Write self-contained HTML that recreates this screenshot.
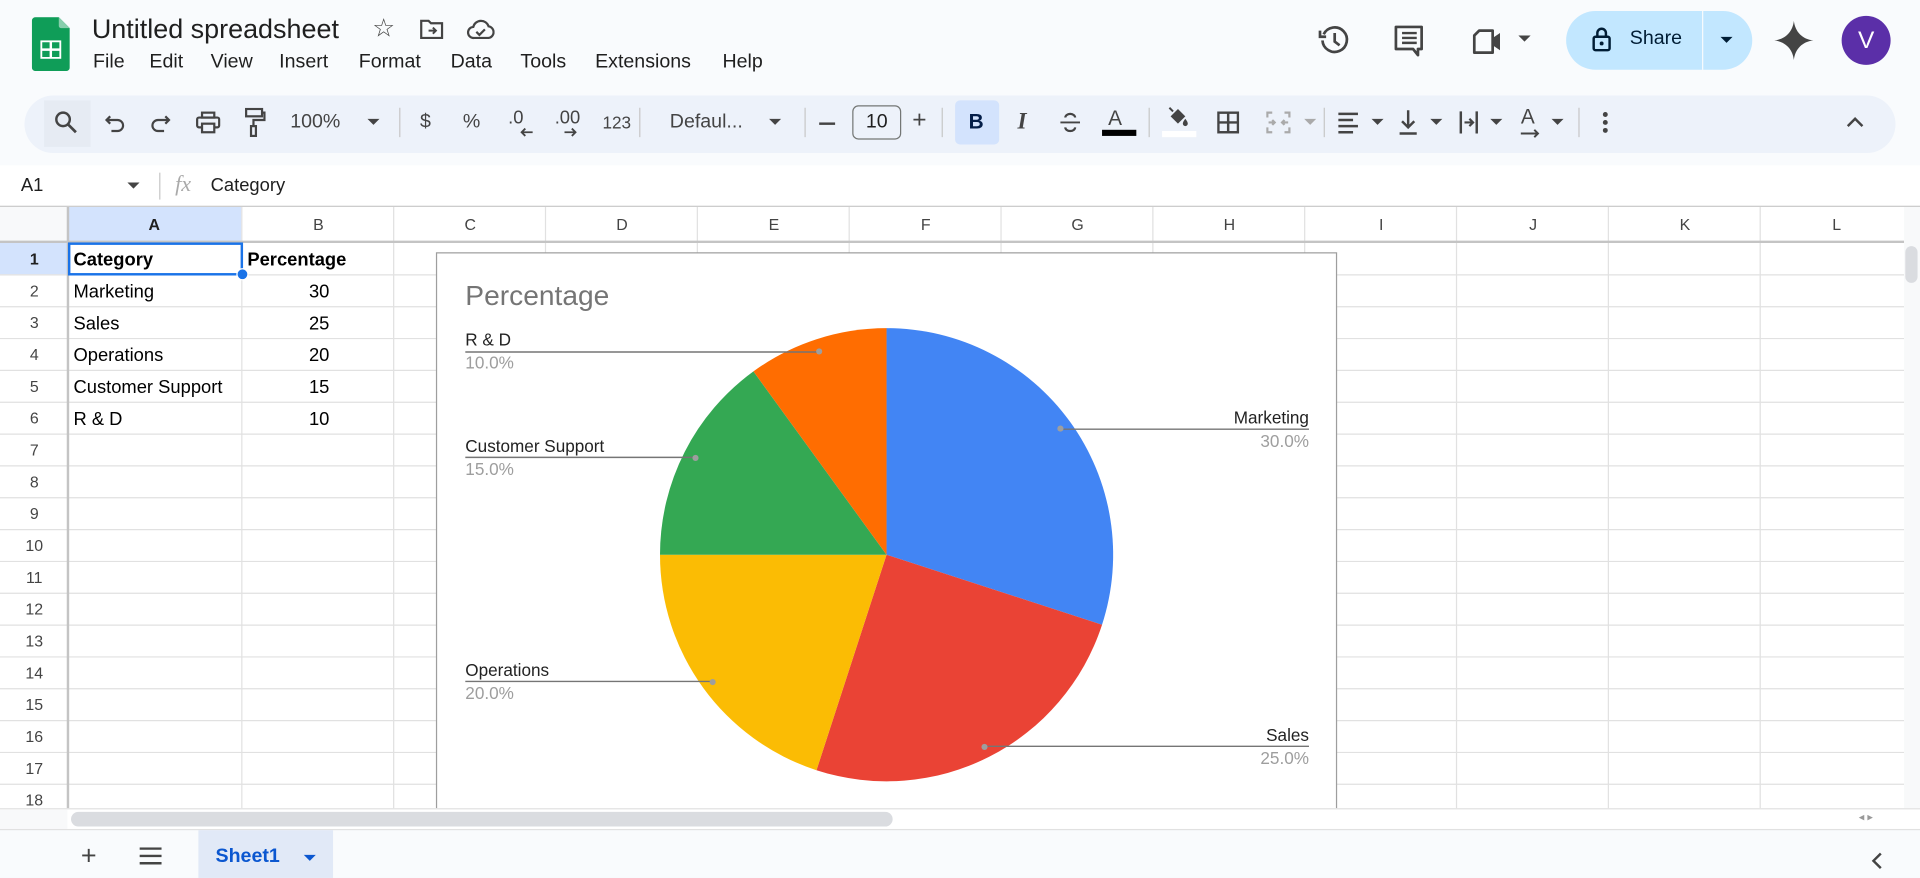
<!DOCTYPE html>
<html><head><meta charset="utf-8">
<style>
html,body{margin:0;padding:0;width:1920px;height:878px;overflow:hidden;background:#fff;font-family:"Liberation Sans",Arial,sans-serif;}
#w{position:absolute;left:0;top:0;width:1568px;height:717px;transform:scale(1.22449);transform-origin:0 0;background:#f9fbfd;}
.a{position:absolute;}
.t{position:absolute;white-space:nowrap;color:#1f1f1f;}
.ic{position:absolute;}
.sep{position:absolute;top:88px;width:1px;height:24px;background:#c7c7c7;}
</style></head><body><div id="w">
<svg class="ic" style="left:26px;top:14px" width="31" height="44" viewBox="0 0 31 44"><path d="M3 0h19l9 9v32a3 3 0 0 1-3 3H3a3 3 0 0 1-3-3V3a3 3 0 0 1 3-3z" fill="#0f9d58"/><path d="M22 0l9 9h-7a2 2 0 0 1-2-2z" fill="#87ceac"/><rect x="7" y="19" width="17" height="15" fill="#fff"/><path d="M8.5 20.5h6v5h-6zM16.5 20.5h6v5h-6zM8.5 27.5h6v5h-6zM16.5 27.5h6v5h-6z" fill="#0f9d58"/></svg>
<div class="t" style="left:75px;top:11px;font-size:22px;color:#1f1f1f">Untitled spreadsheet</div>
<div class="t" style="left:304px;top:11px;font-size:21px;color:#444">☆</div>
<svg class="ic" style="left:343px;top:15px" width="20" height="18" viewBox="0 0 20 18"><path d="M1 2h6l2 2h9v12H1z" fill="none" stroke="#444" stroke-width="1.8"/><path d="M7 10h6M10.5 7.5L13 10l-2.5 2.5" fill="none" stroke="#444" stroke-width="1.6"/></svg>
<svg class="ic" style="left:381px;top:15px" width="23" height="18" viewBox="0 0 23 18"><path d="M6 16a4.5 4.5 0 0 1-.5-9A6.5 6.5 0 0 1 18 6.5 4.8 4.8 0 0 1 18 16z" fill="none" stroke="#444" stroke-width="1.8"/><path d="M8 11l2.5 2.5L15 9" fill="none" stroke="#444" stroke-width="1.8"/></svg>
<div class="t" style="left:76px;top:42px;font-size:16px">File</div>
<div class="t" style="left:122px;top:42px;font-size:16px">Edit</div>
<div class="t" style="left:172px;top:42px;font-size:16px">View</div>
<div class="t" style="left:228px;top:42px;font-size:16px">Insert</div>
<div class="t" style="left:293px;top:42px;font-size:16px">Format</div>
<div class="t" style="left:368px;top:42px;font-size:16px">Data</div>
<div class="t" style="left:425px;top:42px;font-size:16px">Tools</div>
<div class="t" style="left:486px;top:42px;font-size:16px">Extensions</div>
<div class="t" style="left:590px;top:42px;font-size:16px">Help</div>
<svg class="ic" style="left:1076px;top:19px" width="28" height="28" viewBox="0 0 28 28"><path d="M5 9A10 10 0 1 1 4 14" fill="none" stroke="#444" stroke-width="2.2"/><path d="M2 6v5h5" fill="none" stroke="#444" stroke-width="2.2"/><path d="M14 8v7l4 3" fill="none" stroke="#444" stroke-width="2.2"/></svg>
<svg class="ic" style="left:1138px;top:20px" width="26" height="28" viewBox="0 0 26 28"><path d="M2 2h21v18h-3v5l-4-5H2z" fill="none" stroke="#444" stroke-width="2.2" stroke-linejoin="round"/><path d="M7 7h12M7 11h12M7 15h12" stroke="#444" stroke-width="2"/></svg>
<svg class="ic" style="left:1202px;top:22px" width="28" height="24" viewBox="0 0 28 24"><path d="M6 3h11v18H2V7z" fill="none" stroke="#444" stroke-width="2.2" stroke-linejoin="round"/><path d="M17 9l6-4v14l-6-4" fill="#444"/></svg>
<svg class="ic" style="left:1240px;top:29px" width="10" height="6"><path d="M0 0h10L5 5z" fill="#444"/></svg>
<div class="a" style="left:1279px;top:9px;width:152px;height:48px;border-radius:24px;background:#c2e7ff"></div>
<div class="a" style="left:1390px;top:9px;width:1px;height:48px;background:#f9fbfd"></div>
<svg class="ic" style="left:1300px;top:21px" width="16" height="22" viewBox="0 0 16 22"><rect x="1.5" y="9" width="13" height="11" rx="1.5" fill="none" stroke="#001d35" stroke-width="2"/><path d="M4.5 9V6a3.5 3.5 0 0 1 7 0v3" fill="none" stroke="#001d35" stroke-width="2"/><circle cx="8" cy="14.5" r="1.6" fill="#001d35"/></svg>
<div class="t" style="left:1331px;top:23px;font-size:16px;color:#001d35">Share</div>
<svg class="ic" style="left:1405px;top:30px" width="10" height="6"><path d="M0 0h10L5 5z" fill="#001d35"/></svg>
<svg class="ic" style="left:1449px;top:17px" width="32" height="32" viewBox="0 0 32 32"><path d="M16 0C17 9 23 15 32 16 23 17 17 23 16 32 15 23 9 17 0 16 9 15 15 9 16 0z" fill="#444"/></svg>
<div class="a" style="left:1504px;top:13px;width:40px;height:40px;border-radius:50%;background:#5b2fa8;color:#fff;font-size:20px;text-align:center;line-height:40px">V</div>
<div class="a" style="left:20px;top:78px;width:1528px;height:47px;border-radius:24px;background:#edf2fa"></div>
<div class="a" style="left:36px;top:82px;width:38px;height:38px;background:#e6ebf3"></div>
<svg class="ic" style="left:44px;top:90px" width="20" height="20" viewBox="0 0 20 20"><circle cx="7.5" cy="7.5" r="5.5" fill="none" stroke="#444" stroke-width="2"/><path d="M11.5 11.5L18 18" stroke="#444" stroke-width="2.2"/></svg>
<svg class="ic" style="left:85px;top:91px" width="18" height="18" viewBox="0 0 18 18"><path d="M5 4L2 7l3 3" fill="none" stroke="#444" stroke-width="1.8"/><path d="M2 7h9a4.5 4.5 0 0 1 0 9H6" fill="none" stroke="#444" stroke-width="1.8"/></svg>
<svg class="ic" style="left:122px;top:91px" width="18" height="18" viewBox="0 0 18 18"><path d="M13 4l3 3-3 3" fill="none" stroke="#444" stroke-width="1.8"/><path d="M16 7H7a4.5 4.5 0 0 0 0 9h5" fill="none" stroke="#444" stroke-width="1.8"/></svg>
<svg class="ic" style="left:160px;top:90px" width="20" height="20" viewBox="0 0 20 20"><rect x="5" y="2" width="10" height="4" fill="none" stroke="#444" stroke-width="1.8"/><rect x="1" y="6" width="18" height="8" rx="1.5" fill="none" stroke="#444" stroke-width="1.8"/><rect x="5" y="11" width="10" height="7" fill="#edf2fa" stroke="#444" stroke-width="1.8"/></svg>
<svg class="ic" style="left:199px;top:88px" width="18" height="24" viewBox="0 0 18 24"><rect x="2" y="1" width="13" height="6" fill="none" stroke="#444" stroke-width="1.8"/><path d="M15 4h2v6H8v5" fill="none" stroke="#444" stroke-width="1.8"/><rect x="6" y="15" width="4" height="8" fill="none" stroke="#444" stroke-width="1.8"/></svg>
<div class="t" style="left:237px;top:91px;font-size:16px;color:#444">100%</div>
<svg class="ic" style="left:300px;top:97px" width="10" height="6"><path d="M0 0h10L5 5z" fill="#444"/></svg>
<div class="sep" style="left:326px"></div>
<div class="t" style="left:343px;top:91px;font-size:16px;color:#444">$</div>
<div class="t" style="left:378px;top:91px;font-size:16px;color:#444">%</div>
<div class="t" style="left:415px;top:88px;font-size:15px;color:#444">.0</div>
<svg class="ic" style="left:424px;top:104px" width="12" height="8"><path d="M11 4H2M5 1L2 4l3 3" fill="none" stroke="#444" stroke-width="1.5"/></svg>
<div class="t" style="left:453px;top:88px;font-size:15px;color:#444">.00</div>
<svg class="ic" style="left:460px;top:104px" width="12" height="8"><path d="M1 4h9M7 1l3 3-3 3" fill="none" stroke="#444" stroke-width="1.5"/></svg>
<div class="t" style="left:492px;top:92px;font-size:14px;color:#444">123</div>
<div class="sep" style="left:522px"></div>
<div class="t" style="left:547px;top:91px;font-size:16px;color:#444">Defaul...</div>
<svg class="ic" style="left:628px;top:97px" width="10" height="6"><path d="M0 0h10L5 5z" fill="#444"/></svg>
<div class="sep" style="left:657px"></div>
<div class="a" style="left:669px;top:100px;width:13px;height:2px;background:#444"></div>
<div class="a" style="left:696px;top:86px;width:40px;height:28px;border:1px solid #747775;border-radius:5px;box-sizing:border-box;font-size:16px;color:#1f1f1f;text-align:center;line-height:26px">10</div>
<div class="t" style="left:745px;top:87px;font-size:20px;color:#444">+</div>
<div class="sep" style="left:769px"></div>
<div class="a" style="left:780px;top:82px;width:36px;height:36px;border-radius:4px;background:#d3e3fd"></div>
<div class="t" style="left:791px;top:90px;font-size:17px;font-weight:bold;color:#041e49">B</div>
<div class="t" style="left:831px;top:89px;font-size:19px;font-style:italic;font-family:'Liberation Serif',serif;font-weight:bold;color:#444">I</div>
<svg class="ic" style="left:865px;top:90px" width="18" height="20" viewBox="0 0 18 20"><path d="M1 10h16" stroke="#444" stroke-width="1.6"/><path d="M5 6a4 3 0 0 1 8 0M5 14a4 3 0 0 0 8 0" fill="none" stroke="#444" stroke-width="1.8"/></svg>
<div class="t" style="left:905px;top:87px;font-size:17px;color:#444">A</div>
<div class="a" style="left:900px;top:106px;width:28px;height:5px;background:#000"></div>
<div class="sep" style="left:938px"></div>
<svg class="ic" style="left:952px;top:86px" width="20" height="20" viewBox="0 0 20 20"><path d="M4 9l6-6 6 6-6 6z" fill="#444"/><path d="M3 2l3 3" stroke="#444" stroke-width="1.6"/><path d="M16 11c1.5 2 2 3 2 4a2 2 0 0 1-4 0c0-1 .5-2 2-4z" fill="#444"/></svg>
<div class="a" style="left:949px;top:107px;width:28px;height:5px;background:#fff"></div>
<svg class="ic" style="left:994px;top:91px" width="18" height="18" viewBox="0 0 18 18"><rect x="1" y="1" width="16" height="16" fill="none" stroke="#444" stroke-width="2"/><path d="M9 1v16M1 9h16" stroke="#444" stroke-width="2"/></svg>
<svg class="ic" style="left:1034px;top:91px" width="20" height="18" viewBox="0 0 20 18"><path d="M1 5V1h4M1 13v4h4M19 5V1h-4M19 13v4h-4M2 9h5M18 9h-5M5 7l2 2-2 2M15 7l-2 2 2 2" fill="none" stroke="#aaa" stroke-width="1.8"/></svg>
<svg class="ic" style="left:1065px;top:97px" width="10" height="6"><path d="M0 0h10L5 5z" fill="#aaa"/></svg>
<div class="sep" style="left:1081px"></div>
<svg class="ic" style="left:1092px;top:91px" width="18" height="18" viewBox="0 0 18 18"><path d="M1 2h16M1 7h12M1 12h16M1 17h12" stroke="#444" stroke-width="2"/></svg>
<svg class="ic" style="left:1120px;top:97px" width="10" height="6"><path d="M0 0h10L5 5z" fill="#444"/></svg>
<svg class="ic" style="left:1142px;top:89px" width="16" height="22" viewBox="0 0 16 22"><path d="M8 1v14M3 10l5 5 5-5" fill="none" stroke="#444" stroke-width="2"/><path d="M1 20h14" stroke="#444" stroke-width="2"/></svg>
<svg class="ic" style="left:1168px;top:97px" width="10" height="6"><path d="M0 0h10L5 5z" fill="#444"/></svg>
<svg class="ic" style="left:1191px;top:90px" width="18" height="20" viewBox="0 0 18 20"><path d="M2 1v18M15 1v18" stroke="#444" stroke-width="2"/><path d="M5 10h7M9 7l3 3-3 3" fill="none" stroke="#444" stroke-width="1.8"/></svg>
<svg class="ic" style="left:1217px;top:97px" width="10" height="6"><path d="M0 0h10L5 5z" fill="#444"/></svg>
<div class="t" style="left:1242px;top:86px;font-size:17px;color:#444">A</div>
<svg class="ic" style="left:1241px;top:104px" width="18" height="10"><path d="M1 5h14M12 2l3 3-3 3" fill="none" stroke="#444" stroke-width="1.6"/></svg>
<svg class="ic" style="left:1267px;top:97px" width="10" height="6"><path d="M0 0h10L5 5z" fill="#444"/></svg>
<div class="sep" style="left:1289px"></div>
<svg class="ic" style="left:1307px;top:91px" width="8" height="18"><circle cx="4" cy="2.5" r="2" fill="#444"/><circle cx="4" cy="9" r="2" fill="#444"/><circle cx="4" cy="15.5" r="2" fill="#444"/></svg>
<svg class="ic" style="left:1508px;top:95px" width="14" height="10"><path d="M1 8l6-6 6 6" fill="none" stroke="#444" stroke-width="2"/></svg>
<div class="a" style="left:0;top:135px;width:1568px;height:34px;background:#fff;border-bottom:1px solid #c7c7c7;box-sizing:border-box"></div>
<div class="t" style="left:17px;top:143px;font-size:15px">A1</div>
<svg class="ic" style="left:104px;top:149px" width="10" height="6"><path d="M0 0h10L5 5z" fill="#444"/></svg>
<div class="a" style="left:130px;top:141px;width:1px;height:22px;background:#c7c7c7"></div>
<div class="t" style="left:143px;top:140px;font-size:18px;font-style:italic;font-family:'Liberation Serif',serif;color:#aaa">fx</div>
<div class="t" style="left:172px;top:143px;font-size:15px">Category</div>
<div class="a" style="left:0;top:169px;width:1568px;height:492px;background:#fff;overflow:hidden">
<svg width="1568" height="492" style="position:absolute;left:0;top:0">
<rect x="0" y="0" width="1555" height="28" fill="#fff"/>
<rect x="0" y="0" width="55" height="28" fill="#f8f9fa"/>
<rect x="56" y="0" width="141" height="28" fill="#d3e3fd"/>
<rect x="0" y="29" width="55" height="26" fill="#d3e3fd"/>
<g stroke="#e1e1e1" stroke-width="1">
<line x1="0" y1="55.5" x2="1555" y2="55.5"/><line x1="0" y1="81.5" x2="1555" y2="81.5"/><line x1="0" y1="107.5" x2="1555" y2="107.5"/><line x1="0" y1="133.5" x2="1555" y2="133.5"/><line x1="0" y1="159.5" x2="1555" y2="159.5"/><line x1="0" y1="185.5" x2="1555" y2="185.5"/><line x1="0" y1="211.5" x2="1555" y2="211.5"/><line x1="0" y1="237.5" x2="1555" y2="237.5"/><line x1="0" y1="263.5" x2="1555" y2="263.5"/><line x1="0" y1="289.5" x2="1555" y2="289.5"/><line x1="0" y1="315.5" x2="1555" y2="315.5"/><line x1="0" y1="341.5" x2="1555" y2="341.5"/><line x1="0" y1="367.5" x2="1555" y2="367.5"/><line x1="0" y1="393.5" x2="1555" y2="393.5"/><line x1="0" y1="419.5" x2="1555" y2="419.5"/><line x1="0" y1="445.5" x2="1555" y2="445.5"/><line x1="0" y1="471.5" x2="1555" y2="471.5"/>
<line x1="197.5" y1="0" x2="197.5" y2="492"/><line x1="321.5" y1="0" x2="321.5" y2="492"/><line x1="445.5" y1="0" x2="445.5" y2="492"/><line x1="569.5" y1="0" x2="569.5" y2="492"/><line x1="693.5" y1="0" x2="693.5" y2="492"/><line x1="817.5" y1="0" x2="817.5" y2="492"/><line x1="941.5" y1="0" x2="941.5" y2="492"/><line x1="1065.5" y1="0" x2="1065.5" y2="492"/><line x1="1189.5" y1="0" x2="1189.5" y2="492"/><line x1="1313.5" y1="0" x2="1313.5" y2="492"/><line x1="1437.5" y1="0" x2="1437.5" y2="492"/>
</g>
<line x1="0" y1="28.5" x2="1555" y2="28.5" stroke="#c4c4c4" stroke-width="2"/>
<line x1="55.5" y1="0" x2="55.5" y2="492" stroke="#c4c4c4" stroke-width="2"/>
<rect x="0" y="0" width="52" height="26" fill="#f8f9fa"/>
<rect x="1555" y="0" width="13" height="492" fill="#f8f9fa"/>
<rect x="1556" y="32" width="10" height="30" rx="5" fill="#dadce0"/>
<g font-family="Liberation Sans, Arial, sans-serif" font-size="13" fill="#444" text-anchor="middle">
<text x="126" y="19" fill="#1f1f1f" font-weight="bold">A</text><text x="260" y="19">B</text><text x="384" y="19">C</text><text x="508" y="19">D</text><text x="632" y="19">E</text><text x="756" y="19">F</text><text x="880" y="19">G</text><text x="1004" y="19">H</text><text x="1128" y="19">I</text><text x="1252" y="19">J</text><text x="1376" y="19">K</text><text x="1500" y="19">L</text>
<text x="28" y="47" fill="#1f1f1f" font-weight="bold">1</text><text x="28" y="73">2</text><text x="28" y="99">3</text><text x="28" y="125">4</text><text x="28" y="151">5</text><text x="28" y="177">6</text><text x="28" y="203">7</text><text x="28" y="229">8</text><text x="28" y="255">9</text><text x="28" y="281">10</text><text x="28" y="307">11</text><text x="28" y="333">12</text><text x="28" y="359">13</text><text x="28" y="385">14</text><text x="28" y="411">15</text><text x="28" y="437">16</text><text x="28" y="463">17</text><text x="28" y="489">18</text>
</g>
<g font-family="Liberation Sans, Arial, sans-serif" font-size="15" fill="#000">
<text x="60" y="48" font-weight="bold">Category</text><text x="202" y="48" font-weight="bold">Percentage</text>
<text x="60" y="74">Marketing</text><text x="60" y="100">Sales</text><text x="60" y="126">Operations</text><text x="60" y="152">Customer Support</text><text x="60" y="178">R &amp; D</text>
<g text-anchor="end"><text x="269" y="74">30</text><text x="269" y="100">25</text><text x="269" y="126">20</text><text x="269" y="152">15</text><text x="269" y="178">10</text></g>
</g>
<rect x="56.5" y="30" width="141" height="25" fill="none" stroke="#1a73e8" stroke-width="2"/>
<circle cx="198" cy="55" r="4.5" fill="#1a73e8" stroke="#fff" stroke-width="1"/>
<rect x="356.5" y="37.5" width="735" height="470" fill="#fff" stroke="#9e9e9e"/>
<g transform="translate(0,-169)">
<text x="380" y="249" font-family="Liberation Sans, Arial, sans-serif" font-size="23" fill="#757575">Percentage</text>
<path d="M724 453L724 268A185 185 0 0 1 900 510.2Z" fill="#4285f4"/>
<path d="M724 453L900 510.2A185 185 0 0 1 666.8 629Z" fill="#ea4335"/>
<path d="M724 453L666.8 629A185 185 0 0 1 539 453Z" fill="#fbbc04"/>
<path d="M724 453L539 453A185 185 0 0 1 615.3 303.3Z" fill="#34a853"/>
<path d="M724 453L615.3 303.3A185 185 0 0 1 724 268Z" fill="#ff6d01"/>
<g stroke="#757575" stroke-width="1.2" fill="none">
<path d="M380 287.5H669"/><path d="M380 373.5H568"/><path d="M380 556.5H582"/><path d="M866 350.5H1069"/><path d="M804 609.5H1069"/>
</g>
<g fill="#9e9e9e"><circle cx="669" cy="287" r="2.5"/><circle cx="568" cy="374" r="2.5"/><circle cx="582" cy="557" r="2.5"/><circle cx="866" cy="350" r="2.5"/><circle cx="804" cy="610" r="2.5"/></g>
<g font-family="Liberation Sans, Arial, sans-serif" font-size="14">
<text x="380" y="282" fill="#222">R &amp; D</text><text x="380" y="301" fill="#9e9e9e">10.0%</text>
<text x="380" y="369" fill="#222">Customer Support</text><text x="380" y="388" fill="#9e9e9e">15.0%</text>
<text x="380" y="552" fill="#222">Operations</text><text x="380" y="571" fill="#9e9e9e">20.0%</text>
<g text-anchor="end"><text x="1069" y="346" fill="#222">Marketing</text><text x="1069" y="365" fill="#9e9e9e">30.0%</text>
<text x="1069" y="605" fill="#222">Sales</text><text x="1069" y="624" fill="#9e9e9e">25.0%</text></g>
</g>
</g>
<rect x="1555" y="455" width="13" height="37" fill="#f8f9fa"/>
</svg>
</div>
<div class="a" style="left:0;top:660px;width:1568px;height:17px;background:#fff;border-top:1px solid #e1e1e1;box-sizing:border-box"></div>
<div class="a" style="left:0;top:661px;width:55px;height:16px;background:#f8f9fa"></div>
<div class="a" style="left:58px;top:663px;width:671px;height:12px;border-radius:6px;background:#dadce0"></div>
<div class="t" style="left:1518px;top:662px;font-size:9px;color:#999">◂ ▸</div>
<div class="a" style="left:0;top:677px;width:1568px;height:40px;background:#f9fbfd;border-top:1px solid #e1e1e1;box-sizing:border-box"></div>
<div class="t" style="left:66px;top:686px;font-size:22px;color:#444">+</div>
<svg class="ic" style="left:114px;top:692px" width="18" height="14"><path d="M0 1h18M0 7h18M0 13h18" stroke="#444" stroke-width="2"/></svg>
<div class="a" style="left:162px;top:678px;width:110px;height:39px;background:#e1e9f7"></div>
<div class="t" style="left:176px;top:691px;font-size:16px;font-weight:bold;color:#0b57d0">Sheet1</div>
<svg class="ic" style="left:248px;top:698px" width="10" height="6"><path d="M0 0h10L5 5z" fill="#0b57d0"/></svg>
<svg class="ic" style="left:1528px;top:696px" width="10" height="14"><path d="M8 1L2 7l6 6" fill="none" stroke="#444" stroke-width="2"/></svg>
</div></body></html>
